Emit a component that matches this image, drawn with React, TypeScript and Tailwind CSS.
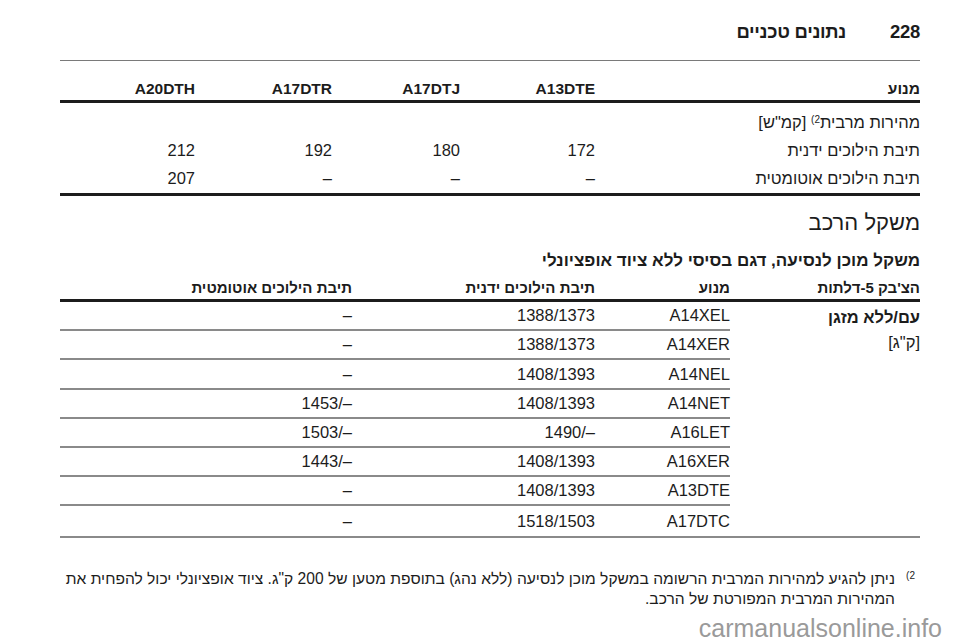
import React from "react";

const rows2 = [
  ["A14XEL", "1388/1373", "–"],
  ["A14XER", "1388/1373", "–"],
  ["A14NEL", "1408/1393", "–"],
  ["A14NET", "1408/1393", "1453/–"],
  ["A16LET", "1490/–", "1503/–"],
  ["A16XER", "1408/1393", "1443/–"],
  ["A13DTE", "1408/1393", "–"],
  ["A17DTC", "1518/1503", "–"],
];

export default function App() {
  return (
    <div
      dir="rtl"
      className="relative h-[642px] w-[960px] overflow-hidden bg-white pl-[60px] pr-[40px] text-[#1c1c1c] font-['Liberation_Sans','Noto_Sans',sans-serif] text-[16.5px]"
    >
      {/* page header */}
      <div className="flex h-[60px] items-center gap-[44px] pt-[4px] font-bold text-[18.5px] tracking-[-0.3px]">
        <span>228</span>
        <span>נתונים טכניים</span>
      </div>
      <div className="border-t-[1.5px] border-[#7a7a7a]" />

      {/* table 1 */}
      <div className="grid h-[42px] grid-cols-[325px_135px_128px_137px_1fr] items-end border-b-[3px] border-[#1c1c1c] pb-[1px] font-bold text-[15.5px] leading-[20px]">
        <div>מנוע</div>
        <div>A13DTE</div>
        <div>A17DTJ</div>
        <div>A17DTR</div>
        <div>A20DTH</div>
      </div>
      <div className="border-b-[3px] border-[#1c1c1c] pt-[5px]">
        <div className="grid h-[28px] grid-cols-[325px_135px_128px_137px_1fr] items-center">
          <div>
            מהירות מרבית<sup className="text-[10px]">2)</sup> [קמ"ש]
          </div>
          <div />
          <div />
          <div />
          <div />
        </div>
        <div className="grid h-[28.5px] grid-cols-[325px_135px_128px_137px_1fr] items-center">
          <div>תיבת הילוכים ידנית</div>
          <div>172</div>
          <div>180</div>
          <div>192</div>
          <div>212</div>
        </div>
        <div className="grid h-[28.5px] grid-cols-[325px_135px_128px_137px_1fr] items-center">
          <div>תיבת הילוכים אוטומטית</div>
          <div>–</div>
          <div>–</div>
          <div>–</div>
          <div>207</div>
        </div>
      </div>

      {/* vehicle weight */}
      <div className="mt-[13px] text-[22px] leading-[28px]">משקל הרכב</div>
      <div className="mt-[13px] text-[17px] font-bold leading-[22px]">
        משקל מוכן לנסיעה, דגם בסיסי ללא ציוד אופציונלי
      </div>

      <div className="mt-[6px] flex h-[24px] items-end border-b-[3px] border-[#1c1c1c] pb-[1px] text-[15px] font-bold leading-[20px]">
        <div className="w-[190px]">הצ'בק 5-דלתות</div>
        <div className="w-[135px]">מנוע</div>
        <div className="w-[243px]">תיבת הילוכים ידנית</div>
        <div className="flex-1">תיבת הילוכים אוטומטית</div>
      </div>

      <div className="flex border-b-2 border-[#8a8a8a]">
        <div className="w-[190px] pt-[5px] leading-[20px]">
          <div className="font-bold">עם/ללא מזגן</div>
          <div className="mt-[5px]">[ק"ג]</div>
        </div>
        <div className="flex-1">
          {rows2.map((r, i) => (
            <div
              key={i}
              className={
                "grid h-[29.2px] grid-cols-[135px_243px_1fr] items-center " +
                (i < rows2.length - 1 ? "border-b-2 border-[#8a8a8a]" : "")
              }
            >
              <div>{r[0]}</div>
              <div>
                <span dir="ltr">{r[1]}</span>
              </div>
              <div>
                <span dir="ltr">{r[2]}</span>
              </div>
            </div>
          ))}
        </div>
      </div>

      {/* footnote */}
      <div className="mt-[31px] flex text-[15.6px] leading-[20px]">
        <div className="w-[25px] shrink-0 pr-[5px] text-[10px] leading-[14px]">2)</div>
        <div className="whitespace-nowrap">
          <div>
            ניתן להגיע למהירות המרבית הרשומה במשקל מוכן לנסיעה (ללא נהג) בתוספת מטען של 200 ק"ג. ציוד אופציונלי יכול להפחית את
          </div>
          <div>המהירות המרבית המפורטת של הרכב.</div>
        </div>
      </div>

      {/* watermark */}
      <div
        dir="ltr"
        className="absolute bottom-[-2px] right-[18px] text-[25px] leading-[32px] text-[#9a9a9a]"
      >
        carmanualsonline.info
      </div>
    </div>
  );
}
